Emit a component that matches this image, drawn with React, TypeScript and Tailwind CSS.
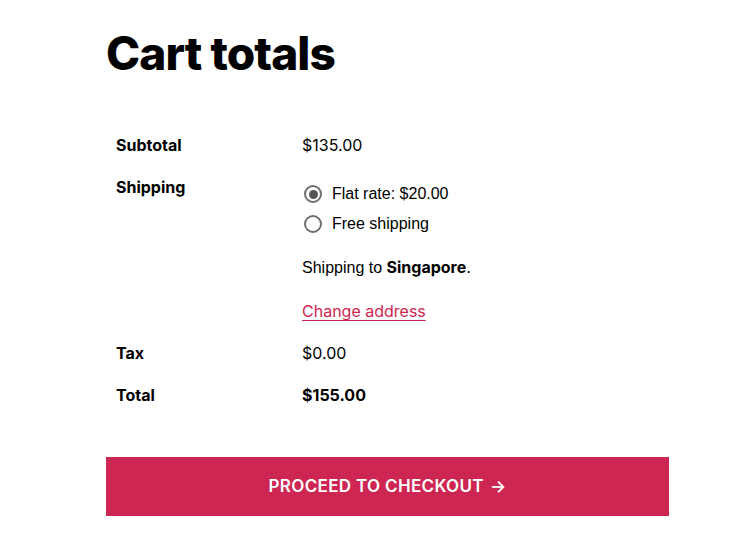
import React from "react";

const inter = { fontFamily: "Inter, 'Liberation Sans', sans-serif" };

function Radio({ checked, label }: { checked?: boolean; label: string }) {
  return (
    <li className="flex items-center h-[30px]">
      <span className="ml-[2px] w-[18px] h-[18px] rounded-full border-2 border-[#6f6f6f] flex items-center justify-center bg-white">
        {checked && <span className="w-[9px] h-[9px] rounded-full bg-[#555555]" />}
      </span>
      <span className="ml-[10px] text-[16px] leading-6 text-black font-['Liberation_Sans',Arial,sans-serif]">{label}</span>
    </li>
  );
}

export default function App() {
  return (
    <div className="min-h-[546px] bg-white text-black font-['Inter','Liberation_Sans',sans-serif]">
      <div className="ml-[106px] w-[563px] pt-[30px]">
        <h2 className="text-[46px] leading-none font-extrabold tracking-[-0.02em] text-black">Cart totals</h2>
        <div className="mt-[48px]">
          <div className="flex py-[9px]">
            <div className="w-[186px] pl-[10px] text-[16px] leading-6 font-bold">Subtotal</div>
            <div className="pl-[10px] text-[16px] leading-6">$135.00</div>
          </div>
          <div className="flex py-[9px]">
            <div className="w-[186px] pl-[10px] text-[16px] leading-6 font-bold">Shipping</div>
            <div className="pl-[10px]">
              <ul className="mt-[4px] list-none p-0">
                <Radio checked label="Flat rate: $20.00" />
                <Radio label="Free shipping" />
              </ul>
              <p className="mt-[16px] text-[16px] leading-6 text-black">
                <span className="font-['Liberation_Sans',Arial,sans-serif]">Shipping to </span>
                <strong className="font-bold">Singapore</strong>.
              </p>
              <p className="mt-[19px] text-[16px] leading-6">
                <a href="#" className="text-[#cd2653] underline underline-offset-[3px] decoration-1">Change address</a>
              </p>
            </div>
          </div>
          <div className="flex py-[9px]">
            <div className="w-[186px] pl-[10px] text-[16px] leading-6 font-bold">Tax</div>
            <div className="pl-[10px] text-[16px] leading-6">$0.00</div>
          </div>
          <div className="flex py-[9px]">
            <div className="w-[186px] pl-[10px] text-[16px] leading-6 font-bold">Total</div>
            <div className="pl-[10px] text-[16px] leading-6 font-bold">$155.00</div>
          </div>
        </div>
        <button
          className="mt-[41px] w-full h-[59px] bg-[#cd2653] text-white text-[17px] font-semibold tracking-[0.02em] uppercase flex items-center justify-center"
          style={inter}
        >
          Proceed to checkout <span className="ml-[6px]">→</span>
        </button>
      </div>
    </div>
  );
}
